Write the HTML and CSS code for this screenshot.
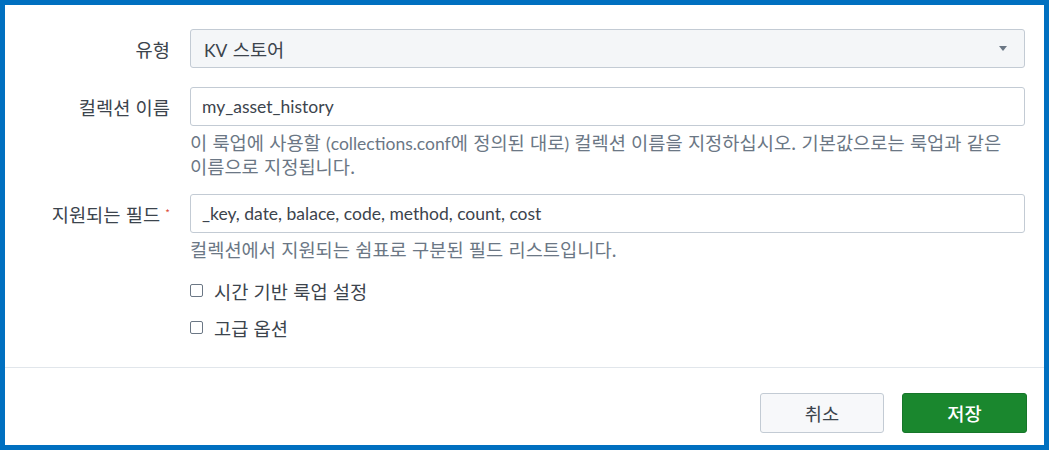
FILE: index.html
```html
<!DOCTYPE html>
<html lang="ko">
<head>
<meta charset="utf-8">
<link rel="stylesheet" href="styles.css">
</head>
<body>
<div class="frame">
  <div class="form">
    <div class="row row-select">
      <div class="label">유형</div>
      <div class="control">
        <div class="select">
          <span><span class="latin">KV</span> 스토어</span>
          <span class="caret"></span>
        </div>
      </div>
    </div>
    <div class="row row-name">
      <div class="label">컬렉션 이름</div>
      <div class="control">
        <div class="input">my_asset_history</div>
        <div class="help">이 룩업에 사용할 <span class="latin">(collections.conf</span>에 정의된 대로<span class="latin">)</span> 컬렉션 이름을 지정하십시오. 기본값으로는 룩업과 같은 이름으로 지정됩니다.</div>
      </div>
    </div>
    <div class="row row-fields">
      <div class="label">지원되는 필드 <span class="req">*</span></div>
      <div class="control">
        <div class="input">_key, date, balace, code, method, count, cost</div>
        <div class="help">컬렉션에서 지원되는 쉼표로 구분된 필드 리스트입니다.</div>
      </div>
    </div>
    <div class="row row-check">
      <div class="label"></div>
      <div class="control">
        <label class="check"><span class="box"></span>시간 기반 룩업 설정</label>
      </div>
    </div>
    <div class="row row-check">
      <div class="label"></div>
      <div class="control">
        <label class="check"><span class="box"></span>고급 옵션</label>
      </div>
    </div>
  </div>
  <div class="footer">
    <button class="btn btn-cancel">취소</button>
    <button class="btn btn-save">저장</button>
  </div>
</div>
</body>
</html>
```
FILE: styles.css
```css
* { box-sizing: border-box; }
html, body { margin: 0; padding: 0; background: #fff; }
body {
  font-family: "Noto Sans CJK KR", "Lato", sans-serif;
  font-size: 18.7px;
  color: #3c444d;
  word-break: keep-all;
}
.latin {
  font-family: "Lato", "Noto Sans CJK KR", sans-serif;
  font-size: 17.5px;
  line-height: 1;
}
.frame {
  width: 1049px;
  height: 450px;
  border: 5px solid #0070c0;
  display: flex;
  flex-direction: column;
  overflow: hidden;
}
.form {
  padding: 24px 19px 0 0;
  flex: 1;
}
.row {
  display: flex;
  align-items: flex-start;
}
.label {
  width: 185px;
  flex: none;
  text-align: right;
  padding-right: 20px;
  line-height: 39px;
  color: #3c444d;
}
.req { color: #dc4e41; font-size: 10px; line-height: 1; vertical-align: 5px; }
.control { flex: 1; min-width: 0; }
.select, .input {
  height: 39px;
  line-height: 24px;
  border: 1px solid #c3cbd4;
  border-radius: 3px;
  padding: 0 11px;
  display: flex;
  align-items: center;
  justify-content: space-between;
  color: #3c444d;
}
.select { background: #f4f6f8; padding-left: 13px; }
.input {
  background: #fff;
  font-family: "Lato", "Noto Sans CJK KR", sans-serif;
  font-size: 17.5px;
}
.caret {
  width: 0; height: 0;
  border-left: 4px solid transparent;
  border-right: 4px solid transparent;
  border-top: 5px solid #6b7785;
  margin-right: 6px;
}
.row-select { margin-bottom: 19px; }
.help {
  color: #6b7785;
  line-height: 24px;
  margin-top: 4px;
  padding-right: 8px;
}
.row-name { margin-bottom: 16px; }
.row-fields { margin-bottom: 11px; }
.row-check .label { line-height: 37px; height: 37px; }
.check {
  display: flex;
  align-items: center;
  height: 37px;
  line-height: 24px;
  color: #3c444d;
}
.box {
  width: 13px; height: 13px;
  border: 1px solid #6b7785;
  border-radius: 2px;
  background: #fff;
  margin-right: 11px;
}
.footer {
  border-top: 1px solid #e1e6eb;
  height: 78px;
  padding: 25px 17px 0 0;
  display: flex;
  justify-content: flex-end;
  align-items: flex-start;
  gap: 18px;
}
.btn {
  font-family: "Noto Sans CJK KR", "Lato", sans-serif;
  font-size: 18.7px;
  line-height: 24px;
  height: 40px;
  border-radius: 3px;
  cursor: pointer;
}
.btn-cancel {
  width: 124px;
  background: #f7f8fa;
  border: 1px solid #c3cbd4;
  color: #3c444d;
}
.btn-save {
  width: 125px;
  background: #1a872e;
  border: 1px solid #16762a;
  color: #fff;
  font-weight: 500;
}
```
